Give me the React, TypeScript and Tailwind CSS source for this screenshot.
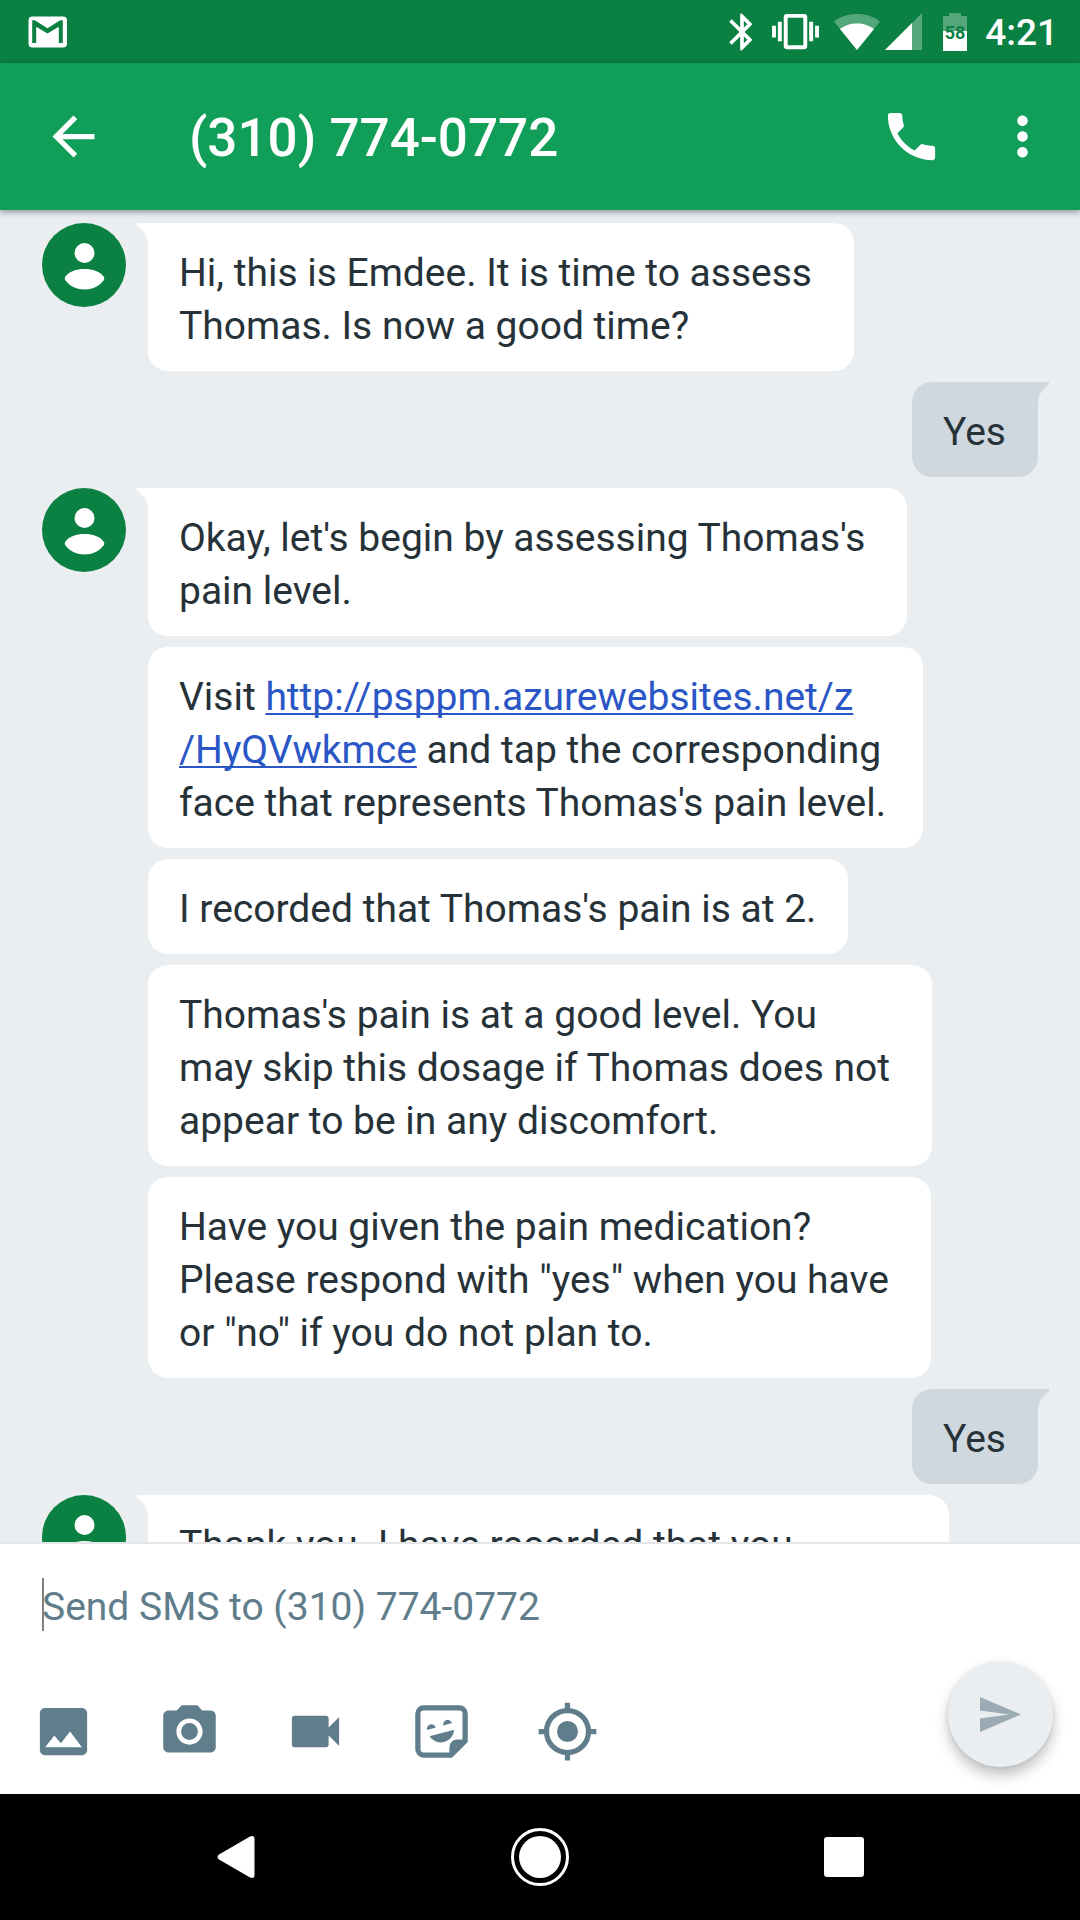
import React from 'react';

type Chunk = { text: string; href?: string };

type Group = {
    id: number;
    from: 'them' | 'me';
    bubbles: Chunk[][];
};

const groups: Group[] = [
    {
        id: 1,
        from: 'them',
        bubbles: [[{ text: 'Hi, this is Emdee. It is time to assess \nThomas. Is now a good time?' }]],
    },
    { id: 2, from: 'me', bubbles: [[{ text: 'Yes' }]] },
    {
        id: 3,
        from: 'them',
        bubbles: [
            [{ text: "Okay, let's begin by assessing Thomas's \npain level." }],
            [
                { text: 'Visit ' },
                { text: 'http://psppm.azurewebsites.net/z\n/HyQVwkmce', href: 'http://psppm.azurewebsites.net/z/HyQVwkmce' },
                { text: " and tap the corresponding \nface that represents Thomas's pain level." },
            ],
            [{ text: "I recorded that Thomas's pain is at 2." }],
            [{ text: "Thomas's pain is at a good level. You \nmay skip this dosage if Thomas does not \nappear to be in any discomfort." }],
            [{ text: 'Have you given the pain medication? \nPlease respond with "yes" when you have \nor "no" if you do not plan to.' }],
        ],
    },
    { id: 4, from: 'me', bubbles: [[{ text: 'Yes' }]] },
    {
        id: 5,
        from: 'them',
        bubbles: [[{ text: 'Thank you. I have recorded that you \nhave given his pain medication to Thomas.' }]],
    },
];

const Icon = ({ d, className = 'size-[63px]' }: { d: string; className?: string }) => (
    <svg viewBox="0 0 24 24" fill="currentColor" className={className} aria-hidden="true">
        <path d={d} />
    </svg>
);

const StatusBar = () => (
    <div className="flex h-[63px] shrink-0 items-center justify-between bg-[#0b8043] pl-7 pr-[22px] text-white">
        <svg viewBox="0 0 40 32" className="h-8 w-10" aria-label="Gmail">
            <rect x="0.5" y="0.5" width="38.5" height="31" rx="4" fill="#fff" />
            <path d="M4.2 27V4.2h2.6L19.5 12.2 32.2 4.2h2.6V27h-4V10.8L19.5 17.6 8.2 10.8V27z" fill="#0b8043" />
        </svg>

        <div className="flex items-center">
            <Icon
                className="size-11"
                d="M17.71 7.71L12 2h-1v7.59L6.41 5 5 6.41 10.59 12 5 17.59 6.41 19 11 14.41V22h1l5.71-5.71-4.3-4.29 4.3-4.29zM13 5.83l1.88 1.88L13 9.59V5.83zm1.88 10.46L13 18.17v-3.76l1.88 1.88z"
            />
            <Icon
                className="ml-2 size-[47px]"
                d="M0 15h2V9H0v6zm3 2h2V7H3v10zm19-8v6h2V9h-2zm-3 8h2V7h-2v10zM16.5 3h-9C6.67 3 6 3.67 6 4.5v15c0 .83.67 1.5 1.5 1.5h9c.83 0 1.5-.67 1.5-1.5v-15c0-.83-.67-1.5-1.5-1.5zM16 19H8V5h8v14z"
            />
            <svg viewBox="0 0 46 38" className="ml-[15px] h-[38px] w-[46px]" fill="#fff" aria-hidden="true">
                <path d="M0 8.5C6 3.5 14 1 23 1s17 2.5 23 7.5L23 37z" opacity="0.3" />
                <path d="M6 16C11 12.5 16 10.5 23 10.5S35 12.5 40 16L23 37z" />
            </svg>
            <svg viewBox="0 0 37 38" className="ml-[5px] h-[38px] w-[37px]" fill="#fff" aria-hidden="true">
                <path d="M37 0v37H0z" opacity="0.3" />
                <path d="M27 10v27H0z" />
            </svg>
            <svg viewBox="0 0 24 38" className="ml-[21px] h-[38px] w-6" fill="#fff" aria-label="Battery 58%">
                <path d="M6 0h12v3h6v15H0V3h6z" opacity="0.3" />
                <path d="M0 18h24v20H0z" />
                <text x="12" y="26" textAnchor="middle" fill="#0b8043" className="font-['Roboto'] text-[18px] font-bold">
                    58
                </text>
            </svg>
            <span className="ml-[18px] pt-0.5 text-[37px] font-medium leading-none">4:21</span>
        </div>
    </div>
);

const AppBar = () => (
    <header className="relative z-10 flex h-[147px] shrink-0 items-center bg-[#119e59] pl-[42px] pr-[26px] text-white shadow-[0_2px_6px_rgba(0,0,0,0.4)]">
        <button type="button" aria-label="Back">
            <Icon d="M20 11H7.83l5.59-5.59L12 4l-8 8 8 8 1.41-1.41L7.83 13H20v-2z" />
        </button>
        <h1 className="ml-[84px] flex-1 pt-1 text-[53px] font-medium">(310) 774-0772</h1>
        <button type="button" aria-label="Call">
            <Icon d="M6.62 10.79c1.44 2.83 3.76 5.14 6.59 6.59l2.2-2.2c.27-.27.67-.36 1.02-.24 1.12.37 2.33.57 3.57.57.55 0 1 .45 1 1V20c0 .55-.45 1-1 1-9.39 0-17-7.61-17-17 0-.55.45-1 1-1h3.5c.55 0 1 .45 1 1 0 1.25.2 2.45.57 3.57.11.35.03.74-.25 1.02l-2.2 2.2z" />
        </button>
        <button type="button" aria-label="More options" className="ml-12">
            <Icon d="M12 8c1.1 0 2-.9 2-2s-.9-2-2-2-2 .9-2 2 .9 2 2 2zm0 2c-1.1 0-2 .9-2 2s.9 2 2 2 2-.9 2-2-.9-2-2-2zm0 6c-1.1 0-2 .9-2 2s.9 2 2 2 2-.9 2-2-.9-2-2-2z" />
        </button>
    </header>
);

const Avatar = () => (
    <svg viewBox="0 0 84 84" className="mr-[22px] size-[84px] shrink-0" aria-hidden="true">
        <circle cx="42" cy="42" r="42" fill="#0b8043" />
        <circle cx="42.5" cy="30" r="10" fill="#fff" />
        <path d="M23.5 53.5C27 48.5 34 46 42.5 46S58 48.5 61.5 53.5C62.5 55 62.5 56 61.5 57.5C57 63.5 50 66.5 42.5 66.5S28 63.5 23.5 57.5C22.5 56 22.5 55 23.5 53.5Z" fill="#fff" />
    </svg>
);

const Bubble = ({ chunks, mine, tail }: { chunks: Chunk[]; mine: boolean; tail: boolean }) => (
    <div
        className={`relative rounded-[20px] pb-[18px] pl-[31px] pr-8 pt-6 text-[39px] leading-[53px] text-[#263238] ${
            mine ? 'rounded-tr-none bg-[#cfd8de]' : 'bg-white'
        } ${tail && !mine ? 'rounded-tl-none' : ''}`}
    >
        {tail && (
            <svg
                viewBox="0 0 11 22"
                className={`absolute top-0 h-[22px] w-[11px] ${mine ? 'left-full -scale-x-100 text-[#cfd8de]' : 'right-full text-white'}`}
                fill="currentColor"
                aria-hidden="true"
            >
                <path d="M0 0H11V22C11 13 7 7 0 3Z" />
            </svg>
        )}
        <p className="whitespace-break-spaces">
            {chunks.map((chunk) =>
                chunk.href ? (
                    <a key={chunk.text} href={chunk.href} className="text-[#2a56c6] underline decoration-2 underline-offset-[3px] [text-decoration-skip-ink:none]">
                        {chunk.text}
                    </a>
                ) : (
                    <span key={chunk.text}>{chunk.text}</span>
                )
            )}
        </p>
    </div>
);

const MessageGroup = ({ group }: { group: Group }) => {
    const mine = group.from === 'me';

    return (
        <div className={`flex items-start ${mine ? 'justify-end' : ''}`}>
            {!mine && <Avatar />}
            <div className={`flex flex-col gap-[11px] ${mine ? 'items-end' : 'items-start'}`}>
                {group.bubbles.map((chunks, i) => (
                    <Bubble key={i} chunks={chunks} mine={mine} tail={i === 0} />
                ))}
            </div>
        </div>
    );
};

const attachments = [
    {
        label: 'Attach picture',
        d: 'M21 19V5c0-1.1-.9-2-2-2H5c-1.1 0-2 .9-2 2v14c0 1.1.9 2 2 2h14c1.1 0 2-.9 2-2zM5 18l3.5-4.5 2.5 3.01L14.5 12l4.5 6H5z',
    },
    {
        label: 'Take photo',
        d: 'M9 2L7.17 4H4c-1.1 0-2 .9-2 2v12c0 1.1.9 2 2 2h16c1.1 0 2-.9 2-2V6c0-1.1-.9-2-2-2h-3.17L15 2H9zm3 15c-2.76 0-5-2.24-5-5s2.24-5 5-5 5 2.24 5 5-2.24 5-5 5zM12 8.8a3.2 3.2 0 1 0 0 6.4 3.2 3.2 0 0 0 0-6.4z',
    },
    {
        label: 'Record video',
        d: 'M17 10.5V7c0-.55-.45-1-1-1H4c-.55 0-1 .45-1 1v10c0 .55.45 1 1 1h12c.55 0 1-.45 1-1v-3.5l4 4v-11l-4 4z',
    },
];

const StickerIcon = () => (
    <svg viewBox="0 0 24 24" className="size-[63px]" fill="currentColor" aria-hidden="true">
        <path
            fillRule="evenodd"
            d="M5.2 2H18.8A3.2 3.2 0 0 1 22 5.2V16L16 22H5.2A3.2 3.2 0 0 1 2 18.8V5.2A3.2 3.2 0 0 1 5.2 2ZM5.2 4A1.2 1.2 0 0 0 4 5.2V18.8A1.2 1.2 0 0 0 5.2 20H15V18A3 3 0 0 1 18 15H20V5.2A1.2 1.2 0 0 0 18.8 4Z"
        />
        <path d="M7.4 13.8L16.8 11.3A5.1 5.1 0 0 1 7.4 13.8Z" />
        <path d="M6.5 11.4A1.7 1.7 0 1 1 9.8 10.5Z" />
        <path d="M12.7 9.7A1.7 1.7 0 1 1 16 8.8Z" />
    </svg>
);

const LocationIcon = () => (
    <svg viewBox="0 0 24 24" className="size-[63px]" aria-hidden="true">
        <circle cx="12" cy="12" r="8" fill="none" stroke="currentColor" strokeWidth="2" />
        <circle cx="12" cy="12" r="4" fill="currentColor" />
        <path d="M12 1v3M12 20v3M1 12h3M20 12h3" stroke="currentColor" strokeWidth="2" />
    </svg>
);

const Composer = () => (
    <form className="flex shrink-0 items-end border-t-2 border-[#e4e6e7] bg-white pb-[27px] pr-[27px] pt-[34px]">
        <div className="flex-1 pb-1">
            <div className="relative ml-[42px]">
                <input
                    type="text"
                    aria-label="Message"
                    placeholder="Send SMS to (310) 774-0772"
                    className="block h-[53px] w-full pt-[5px] text-[39px] text-[#263238] outline-none placeholder:text-[#607d8b]"
                />
                <span className="absolute left-0 top-0 h-full w-0.5 bg-[#808080]" />
            </div>
            <div className="mt-[69px] flex gap-[63px] pl-8 text-[#607d8b]">
                {attachments.map((item) => (
                    <button key={item.label} type="button" aria-label={item.label}>
                        <Icon d={item.d} />
                    </button>
                ))}
                <button type="button" aria-label="Stickers">
                    <StickerIcon />
                </button>
                <button type="button" aria-label="Share location">
                    <LocationIcon />
                </button>
            </div>
        </div>
        <button
            type="button"
            aria-label="Send"
            className="flex size-[105px] items-center justify-center rounded-full bg-[#eaeef1] text-[#9aabb4] shadow-[0_8px_14px_rgba(0,0,0,0.25),0_0_4px_rgba(0,0,0,0.08)]"
        >
            <svg viewBox="0 0 41 35" className="h-[35px] w-[41px]" fill="currentColor" aria-hidden="true">
                <path d="M0 0L41 17.5 0 35V21.5L29 17.5 0 13.5z" />
            </svg>
        </button>
    </form>
);

const NavBar = () => (
    <nav className="flex h-[126px] shrink-0 items-center justify-center bg-black text-white">
        <button type="button" aria-label="Back" className="flex w-[304px] justify-center">
            <svg viewBox="0 0 38 44" className="h-11 w-[38px]" fill="currentColor" aria-hidden="true">
                <path d="M2 19.5L33 1.5Q37.5 0 37.5 4V40Q37.5 44 33 42.5L2 24.5Q-1 22 2 19.5Z" />
            </svg>
        </button>
        <button type="button" aria-label="Home" className="flex w-[304px] justify-center">
            <svg viewBox="0 0 58 58" className="size-[58px]" aria-hidden="true">
                <circle cx="29" cy="29" r="27.5" fill="none" stroke="currentColor" strokeWidth="3" />
                <circle cx="29" cy="29" r="21" fill="currentColor" />
            </svg>
        </button>
        <button type="button" aria-label="Recent apps" className="flex w-[304px] justify-center">
            <span className="size-10 rounded-[3px] bg-white" />
        </button>
    </nav>
);

const App = () => {
    return (
        <div className="flex h-screen flex-col bg-[#eaeef1] font-['Roboto',sans-serif]">
            <StatusBar />
            <AppBar />
            <main className="flex min-h-0 flex-1 flex-col gap-[11px] overflow-hidden px-[42px] pt-[13px]">
                {groups.map((group) => (
                    <MessageGroup key={group.id} group={group} />
                ))}
            </main>
            <Composer />
            <NavBar />
        </div>
    );
};

export default App;
